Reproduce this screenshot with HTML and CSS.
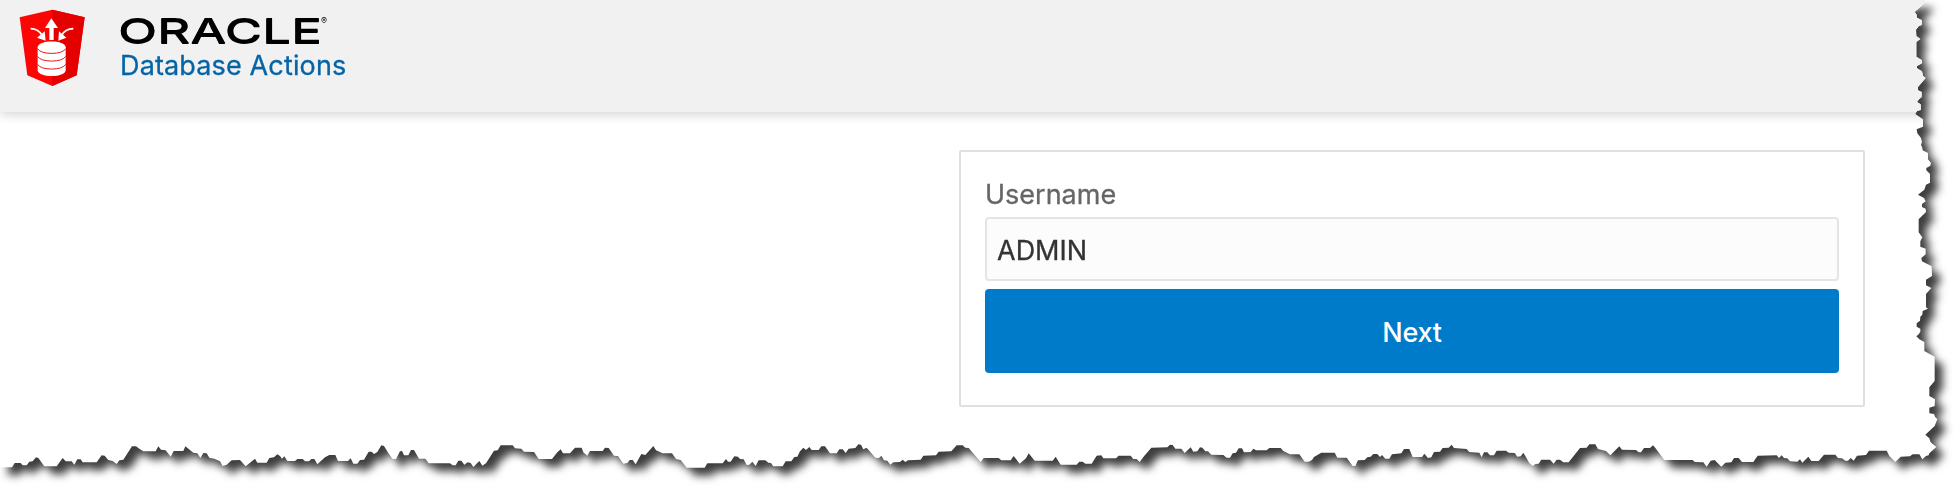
FILE: index.html
```
<!DOCTYPE html>
<html lang="en">
<head>
<meta charset="utf-8">
<title>Oracle Database Actions</title>
<link rel="stylesheet" href="styles.css">
</head>
<body>
<svg class="defs" width="0" height="0" aria-hidden="true">
  <clipPath id="torn" clipPathUnits="userSpaceOnUse">
    <path transform="scale(.333333) translate(0 1284)" d="M0-1284 L0 118 36 118 44 105 62 105 68 112 80 112 88 101 98 100 108 88 115 90 133 115 170 115 188 90 197 100 215 100 223 110 232 94 242 94 248 103 290 103 305 82 314 83 325 96 338 99 350 108 358 97 370 95 396 55 408 55 418 62 430 70 467 70 475 55 483 65 497 67 512 86 521 69 550 69 556 55 580 74 592 76 601 90 610 75 620 76 628 89 643 92 660 100 668 114 680 110 695 97 720 96 737 115 765 92 772 104 800 104 808 90 822 88 832 79 840 84 846 92 853 85 862 99 885 99 892 93 908 93 915 100 927 100 934 93 943 93 952 109 975 88 988 81 1006 81 1014 99 1044 99 1052 91 1060 107 1072 107 1080 96 1092 95 1106 71 1115 71 1122 78 1132 72 1144 52 1152 54 1165 75 1178 93 1188 93 1200 70
    1206 69 1212 82 1225 82 1233 66 1242 66 1257 92 1276 92 1286 106 1350 106 1358 112 1367 112 1375 98 1384 98 1393 110 1403 103 1412 105 1420 117 1438 99 1447 113 1458 106 1482 68 1493 67 1502 52 1538 52 1545 61 1564 62 1572 71 1602 72 1616 93 1656 93 1672 73 1682 64 1689 76 1710 76 1725 59 1745 59 1750 73 1762 83 1770 69 1808 69 1815 59 1826 60 1842 83 1854 84 1870 107 1882 105 1889 96 1898 96 1907 109 1924 78 1936 81 1960 54 1968 67 1988 76 2016 76 2028 93 2042 96 2060 119 2114 119 2122 106 2168 106 2178 93 2184 101 2192 101 2203 85 2214 86 2220 93 2231 94 2240 111 2248 110 2257 101 2267 114 2276 97 2296 97 2305 104 2313 105 2320 115 2348 115 2357 100 2374 100 2383 87 2392 86 2400 70
    2410 59 2418 66 2428 57 2435 66 2456 66 2464 55 2475 55 2490 76 2510 76 2518 64 2528 64 2537 75 2546 62 2566 60 2575 49 2583 50 2590 64 2600 59 2626 89 2637 90 2644 83 2652 97 2662 98 2671 110 2680 103 2700 102 2708 95 2716 102 2724 97 2762 95 2770 83 2808 82 2816 71 2854 70 2870 52 2888 52 2896 59 2906 60 2942 102 2951 90 2996 90 3004 97 3032 97 3041 84 3059 107 3078 91 3086 76 3104 98 3158 98 3167 86 3182 110 3230 110 3238 101 3248 101 3256 107 3275 107 3290 83 3304 82 3310 91 3348 91 3356 83 3392 83 3400 93 3410 93 3419 102 3432 85 3454 59 3502 58 3510 50 3518 51 3526 62 3544 62 3554 75 3572 58 3580 71 3592 70 3600 58
    3607 59 3616 70 3624 70 3634 80 3670 81 3680 89 3690 89 3698 76 3708 74 3716 61 3726 61 3732 73 3752 72 3760 62 3768 67 3800 67 3808 60 3842 60 3850 69 3870 79 3898 79 3914 101 3926 101 3936 96 3942 87 3956 79 3964 74 4004 74 4012 89 4040 89 4058 114 4066 114 4074 97 4094 96 4102 88 4112 86 4120 78 4132 78 4140 87 4146 81 4156 92 4168 92 4176 79 4204 76 4212 63 4228 63 4238 87 4266 87 4273 77 4284 90 4294 88 4302 72 4320 71 4328 60 4346 59 4355 50 4362 60 4400 63 4408 72 4438 74 4445 88 4452 73 4462 73 4470 82 4482 82 4490 68 4518 68 4526 74 4544 75 4552 86 4562 85 4570 74 4576 84 4588 105 4598 114 4606 108 4616 107 4624 95 4650 95 4661 107 4670 95 4680 95 4690 103 4706 103
    4740 60 4760 59 4768 49 4786 49 4794 63 4806 66 4818 69 4831 82 4858 55 4866 65 4908 66 4916 73 4923 73 4932 60 4950 60 4959 52 4966 60 4993 96 5078 96 5084 102 5110 103 5120 116 5132 98 5144 96 5164 116 5176 104 5194 103 5202 90 5216 90 5226 102 5260 102 5273 83 5330 82 5337 90 5345 82 5352 90 5362 91 5370 100 5392 101 5400 94 5407 104 5425 86 5434 99 5456 99 5472 80 5506 80 5514 90 5526 91 5536 98 5544 98 5552 90 5561 98 5571 83 5598 81 5607 68 5660 68 5668 84 5686 102 5702 86 5730 85 5738 79 5758 79 5767 94 5778 84 5786 82 5788 76 5809 57
    5792 43 5788 31 5776 20 5788 9 5804-6 5812-26 5805-34 5802-42 5788-44 5788-61 5804-66 5805-86 5800-89 5788-96 5788-122 5804-141 5804-214 5773-231 5773-258 5758-266 5749-275 5756-281 5761-289 5761-298 5750-304 5750-314 5760-322 5761-334 5767-340 5768-351 5784-358 5778-362 5778-402 5794-420 5778-428 5778-445 5796-456 5795-485 5766-500 5764-510 5777-521 5777-538 5761-544 5761-560 5767-572
    5756-587 5756-626 5778-648 5777-658 5766-663 5766-672 5777-680 5772-690 5754-700 5773-715 5778-730 5790-736 5790-762 5779-773 5779-780 5791-787 5793-795 5784-806 5784-825 5768-833 5767-841 5763-850 5766-858 5763-870 5752-884 5750-896 5769-904 5769-926 5746-942 5752-952 5763-954 5762-971 5751-978 5757-986 5765-993 5765-1008 5754-1013 5754-1023 5777-1050 5769-1056 5766-1070 5751-1079 5751-1086 5766-1094 5766-1103 5749-1114 5749-1158 5761-1167 5749-1176 5748-1195 5756-1205 5766-1210 5766-1223 5751-1231 5750-1240 5744-1248 5760-1262 5768-1270 5776-1284Z"/>
  </clipPath>
</svg>
<div class="sheet">
  <div class="paper">
    <header class="header">
      <svg class="badge" viewBox="0 0 270 285" aria-hidden="true">
        <path fill="#fb0505" d="M127 29 224 52 200 226 127 258 52 226 29 52Z"/>
        <path fill="#e50000" d="M127 29 224 52 200 226 127 258Z"/>
        <path fill="#fff" d="M124 55 144 84H131V120H118V84H105Z"/>
        <g fill="none" stroke="#fff" stroke-width="5">
          <path d="M62 86Q86 87 97 107"/><path d="M190 86Q165 87 154 107"/>
        </g>
        <path fill="#fff" d="M81 113 104 94 107 122ZM169 113 147 94 145 122Z"/>
        <path fill="#fff" d="M83 142C83 119 167 119 167 142V211C167 234 83 234 83 211Z"/>
        <g fill="none" stroke="#ed1515" stroke-width="3">
          <path d="M83 146C91 165 159 165 167 146M83 169C91 188 159 188 167 169M83 193C91 212 159 212 167 193"/>
        </g>
      </svg>
      <div class="brand">
        <svg class="wordmark" width="212" height="34" viewBox="0 0 212 34">
          <text class="wordmark-text" x="-2" y="29" textLength="204" lengthAdjust="spacingAndGlyphs">ORACLE</text>
          <text class="reg" x="201" y="10">®</text>
        </svg>
        <div class="product">Database Actions</div>
      </div>
    </header>
    <main class="content">
      <form class="login">
        <label class="label" for="username">Username</label>
        <input class="field" id="username" type="text" value="ADMIN">
        <button class="next" type="button">Next</button>
      </form>
    </main>
  </div>
</div>
</body>
</html>
```
FILE: styles.css
```
* { box-sizing: border-box; }
body {
  margin: 0;
  background: #fff;
  font-family: Inter, "Liberation Sans", sans-serif;
  overflow: hidden;
}
.defs { position: absolute; }
.sheet { filter: drop-shadow(8px 8px 4.5px rgba(0, 0, 0, .76)); }
.paper {
  width: 1958px;
  height: 488px;
  background: #fff;
  clip-path: url(#torn);
}
.header {
  display: flex;
  height: 112px;
  padding-left: 10px;
  background: #f1f1f1;
  box-shadow: 0 3px 10px rgba(0, 0, 0, .16);
}
.badge { width: 90px; height: 95px; }
.brand { padding: 14px 0 0 20px; }
.wordmark { display: block; overflow: visible; }
.wordmark-text {
  font-size: 33.5px;
  font-weight: 500;
  filter: drop-shadow(0 1.6px 0 #000);
}
.reg { font-size: 9px; }
.product {
  margin-top: 1px;
  color: #0564a5;
  font-size: 27px;
  line-height: 34px;
  letter-spacing: .14px;
  white-space: nowrap;
  -webkit-text-stroke: .3px;
}
.content { display: flex; padding: 38px 0 0 959px; }
.login {
  display: flex;
  flex-direction: column;
  width: 906px;
  height: 257px;
  padding: 24px 24px 0;
  border: 2px solid #e0e0e0;
  border-radius: 2px;
}
.label {
  height: 41px;
  color: #666;
  font-size: 27px;
  line-height: 38px;
  -webkit-text-stroke: .3px;
}
.field {
  height: 64px;
  padding: 2px 10px 0;
  border: 2px solid #e4e4e4;
  border-radius: 4px;
  background: #fcfcfc;
  color: #333;
  font: 27px Inter, sans-serif;
  -webkit-text-stroke: .3px;
}
.next {
  height: 84px;
  margin-top: 8px;
  padding: 2px 0 0;
  border: 0;
  border-radius: 4px;
  background: #007bc9;
  color: #fff;
  font: 500 27px Inter, sans-serif;
  letter-spacing: -.2px;
}
```
